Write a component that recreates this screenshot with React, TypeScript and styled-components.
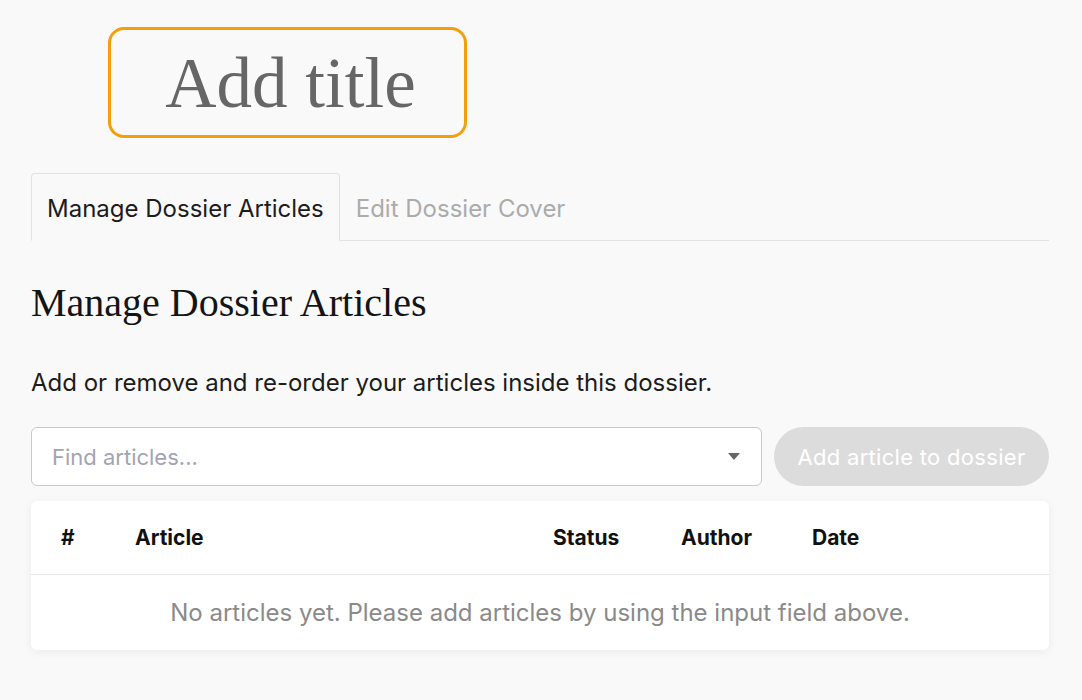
import React, { useState } from 'react';
import styled, { createGlobalStyle } from 'styled-components';

const GlobalStyle = createGlobalStyle`
  html, body {
    margin: 0;
    padding: 0;
    background: #f9f9f9;
  }
  body {
    font-family: Inter, "Noto Sans", sans-serif;
    color: #1c1c1c;
  }
`;

const Page = styled.div`
  padding: 27px 33px 40px 31px;
  display: flex;
  flex-direction: column;
`;

const TitleBox = styled.div`
  align-self: flex-start;
  margin-left: 77px;
  width: 359px;
  height: 111px;
  box-sizing: border-box;
  border: 3px solid #f59e0b;
  border-radius: 16px;
  display: flex;
  align-items: center;
  justify-content: center;
  font-family: "Liberation Serif", "DejaVu Serif", serif;
  font-size: 71px;
  color: #666666;
  padding: 2px 0 0 6px;
`;

const TabBar = styled.div`
  margin-top: 35px;
  display: flex;
  border-bottom: 1px solid #e2e2e2;
`;

const Tab = styled.button<{ $active: boolean }>`
  height: 68px;
  box-sizing: border-box;
  padding: 2px 15px 0;
  margin-bottom: -1px;
  background: ${p => (p.$active ? '#f9f9f9' : 'transparent')};
  border: 1px solid ${p => (p.$active ? '#e2e2e2' : 'transparent')};
  border-bottom-color: ${p => (p.$active ? '#f9f9f9' : 'transparent')};
  border-radius: 4px 4px 0 0;
  font-family: Inter, sans-serif;
  font-size: 24px;
  color: ${p => (p.$active ? '#1c1c1c' : '#ababab')};
  cursor: pointer;
`;

const Heading = styled.h2`
  margin: 38px 0 0;
  font-family: "Liberation Serif", "DejaVu Serif", serif;
  font-weight: 400;
  font-size: 40px;
  line-height: 48px;
  color: #141414;
`;

const Intro = styled.p`
  margin: 40px 0 0;
  font-size: 24px;
  line-height: 32px;
  color: #1c1c1c;
`;

const SearchRow = styled.div`
  margin-top: 28px;
  display: flex;
  gap: 12px;
`;

const SearchField = styled.div`
  flex: 1;
  height: 59px;
  box-sizing: border-box;
  background: #ffffff;
  border: 1px solid #c9c9c9;
  border-radius: 6px;
  display: flex;
  align-items: center;
  padding: 0 21px 0 20px;
`;

const SearchInput = styled.input`
  flex: 1;
  border: none;
  outline: none;
  background: transparent;
  font-family: Inter, sans-serif;
  font-size: 22px;
  color: #1c1c1c;
  padding: 0;

  &::placeholder {
    color: #a4a3b3;
  }
`;

const Caret = styled.span`
  width: 0;
  height: 0;
  border-left: 6px solid transparent;
  border-right: 6px solid transparent;
  border-top: 7px solid #666666;
`;

const AddButton = styled.button`
  width: 275px;
  height: 59px;
  border: none;
  border-radius: 30px;
  background: #dcdcdc;
  color: #ffffff;
  font-family: Inter, sans-serif;
  font-size: 22px;
  letter-spacing: 0.3px;
  cursor: not-allowed;
`;

const TableCard = styled.div`
  margin-top: 15px;
  background: #ffffff;
  border-radius: 6px;
  box-shadow: 0 2px 10px rgba(0, 0, 0, 0.06);
`;

const HeaderRow = styled.div`
  display: grid;
  grid-template-columns: 74px 418px 128px 131px 1fr;
  align-items: center;
  height: 73px;
  padding-left: 30px;
  border-bottom: 1px solid #e6e6e6;
`;

const HeaderCell = styled.div`
  font-size: 21px;
  font-weight: 700;
  color: #111111;
`;

const EmptyRow = styled.div`
  height: 75px;
  display: flex;
  align-items: center;
  justify-content: center;
  font-size: 24px;
  color: #8a8a8a;
`;

const columns = ['#', 'Article', 'Status', 'Author', 'Date'];

export default function App() {
  const [tab, setTab] = useState<'articles' | 'cover'>('articles');
  const [query, setQuery] = useState('');

  return (
    <>
      <GlobalStyle />
      <Page>
        <TitleBox>Add title</TitleBox>

        <TabBar>
          <Tab $active={tab === 'articles'} onClick={() => setTab('articles')}>
            Manage Dossier Articles
          </Tab>
          <Tab $active={tab === 'cover'} onClick={() => setTab('cover')}>
            Edit Dossier Cover
          </Tab>
        </TabBar>

        <Heading>Manage Dossier Articles</Heading>
        <Intro>Add or remove and re-order your articles inside this dossier.</Intro>

        <SearchRow>
          <SearchField>
            <SearchInput
              placeholder="Find articles..."
              value={query}
              onChange={e => setQuery(e.target.value)}
            />
            <Caret />
          </SearchField>
          <AddButton disabled>Add article to dossier</AddButton>
        </SearchRow>

        <TableCard>
          <HeaderRow>
            {columns.map(c => (
              <HeaderCell key={c}>{c}</HeaderCell>
            ))}
          </HeaderRow>
          <EmptyRow>No articles yet. Please add articles by using the input field above.</EmptyRow>
        </TableCard>
      </Page>
    </>
  );
}
